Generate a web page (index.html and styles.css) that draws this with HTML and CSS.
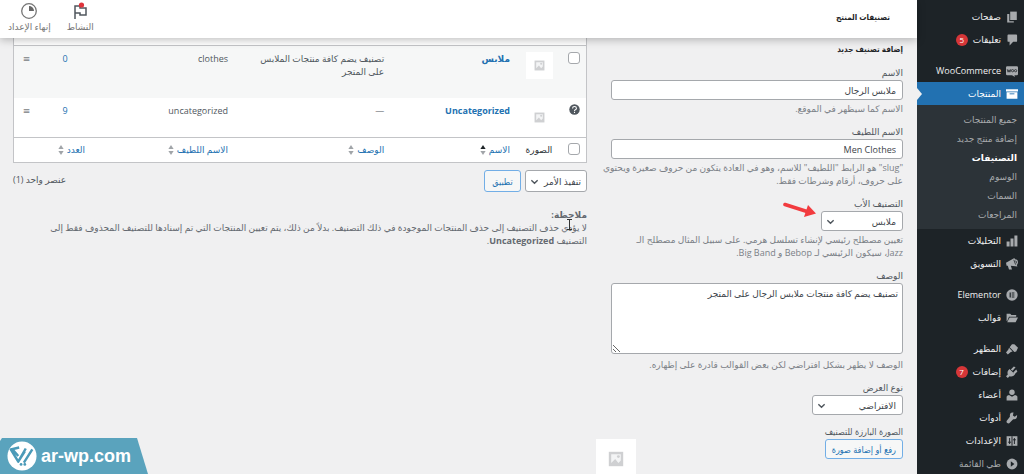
FILE: index.html
```html
<!DOCTYPE html>
<html lang="ar" dir="rtl">
<head>
<meta charset="utf-8">
<title>تصنيفات المنتج</title>
<link rel="stylesheet" href="styles.css">
</head>
<body>
<svg class="defs" aria-hidden="true">
  <symbol id="placeholder" viewBox="0 0 20 20">
    <path d="M1 1h18v18H1z" fill="#cfd0d2"/>
    <path d="M4 4h12v8l-3 3-4-5-5 5z" fill="#f3f4f5"/>
    <circle cx="13" cy="7" r="1.800" fill="#cfd0d2"/>
  </symbol>
  <symbol id="sort" viewBox="0 0 6 12"><path class="up" d="M3 1l2.600 4H.4z"/><path class="down" d="M3 11L.4 7h5.200z"/></symbol>
</svg>
<div class="shell">
  <nav class="menu" aria-label="القائمة الرئيسية">
    <ul class="menu-list">
      <li><a class="item" href="#"><svg class="icon" viewBox="0 0 20 20"><path d="M7 1h11v14H7z"/><path d="M2 5h3.500v12H13v2H2z"/></svg>صفحات</a></li>
      <li><a class="item" href="#"><svg class="icon" viewBox="0 0 20 20"><path d="M4 1h13q1.500 0 1.500 1.500v9q0 1.500-1.500 1.500h-5l-6 6v-6H4q-1.500 0-1.500-1.500v-9Q2.500 1 4 1z"/></svg>تعليقات<span class="badge">5</span></a></li>
      <li class="group"><a class="item" href="#"><svg class="icon" viewBox="0 0 20 20"><path d="M2 2h16q2 0 2 2v11q0 2-2 2h-4l1 3-5-3H2q-2 0-2-2V4q0-2 2-2z"/><path d="M2 7l1.500 5L5 8l1.500 4L8 7" fill="none" stroke="#1d2327" stroke-width="1.300"/><circle cx="11" cy="9.500" r="1.900" fill="none" stroke="#1d2327" stroke-width="1.300"/><circle cx="16" cy="9.500" r="1.900" fill="none" stroke="#1d2327" stroke-width="1.300"/></svg>WooCommerce</a></li>
      <li><a class="item current" href="#"><svg class="icon" viewBox="0 0 20 20"><path d="M0 2h20v4H0zM1 7h18v11H1z"/><path d="M6 9h8v1.500H6z" fill="#2271b1"/></svg>المنتجات</a>
        <ul class="submenu">
          <li><a href="#">جميع المنتجات</a></li>
          <li><a href="#">إضافة منتج جديد</a></li>
          <li><a class="active" href="#">التصنيفات</a></li>
          <li><a href="#">الوسوم</a></li>
          <li><a href="#">السمات</a></li>
          <li><a href="#">المراجعات</a></li>
        </ul>
      </li>
      <li><a class="item" href="#"><svg class="icon" viewBox="0 0 20 20"><path d="M14 1h5v18h-5zM7.500 6h5v13h-5zM1 11h5v8H1z"/></svg>التحليلات</a></li>
      <li><a class="item" href="#"><svg class="icon" viewBox="0 0 20 20"><path d="M0 8L14 0l5 14-11-1 2 6H5l-2-6H1z"/><circle cx="15" cy="7" r="4" fill="none" stroke="#a7aaad" stroke-width="2"/><path d="M13 3l3 8" stroke="#1d2327" stroke-width="1.300"/></svg>التسويق</a></li>
      <li class="group"><a class="item" href="#"><svg class="icon" viewBox="0 0 20 20"><circle cx="10" cy="10" r="9.500"/><path d="M6 6h2v8H6zM9.500 6H14v1.600H9.500zM9.500 9.200H14v1.600H9.500zM9.500 12.400H14V14H9.500z" fill="#1d2327"/></svg>Elementor</a></li>
      <li><a class="item" href="#"><svg class="icon" viewBox="0 0 20 20"><path d="M1 3h6l2 2h8v3H5l-3 7H1z"/><path d="M6 9h14l-4 8H2z"/></svg>قوالب</a></li>
      <li class="group"><a class="item" href="#"><svg class="icon" viewBox="0 0 20 20"><path d="M10 2l4 0 6 6-3 6-3 1-8-8z"/><path d="M5 8l6 6-3 1-5 4-3-3 4-5z"/></svg>المظهر</a></li>
      <li><a class="item" href="#"><svg class="icon" viewBox="0 0 20 20"><path d="M6 5l9 9q-4 5-9 3l-3 3-3-3 3-3q-2-5 3-9z"/><path d="M8 6l5-5 3 1-5 6zM12 11l5-5 2 3-5 5z"/></svg>إضافات<span class="badge">7</span></a></li>
      <li><a class="item" href="#"><svg class="icon" viewBox="0 0 20 20"><circle cx="10" cy="5.500" r="4.500"/><path d="M1 19v-6q0-2 4-3l5 3 5-3q4 1 4 3v6z"/></svg>أعضاء</a></li>
      <li><a class="item" href="#"><svg class="icon" viewBox="0 0 20 20"><path d="M18.500 5l-4 3-3-2 1-5q-7-1-6 7L1 15q-1 4 4 4l7-7q7 1 6.500-7z"/></svg>أدوات</a></li>
      <li><a class="item" href="#"><svg class="icon" viewBox="0 0 20 20"><path d="M1 2h18v16H1z"/><path d="M6 5v10M14 5v10M3.500 12h5M11.500 8h5M10 2v16" stroke="#1d2327" stroke-width="1.600"/></svg>الإعدادات</a></li>
      <li><a class="item collapse" href="#"><svg class="icon" viewBox="0 0 20 20"><circle cx="10" cy="10" r="9"/><path d="M8 5.500v9l6-4.500z" fill="#1d2327"/></svg>طي القائمة</a></li>
    </ul>
  </nav>

  <div class="page">
    <header class="topbar">
      <h1 class="topbar-title">تصنيفات المنتج</h1>
      <div class="topbar-actions">
        <button class="tab" type="button"><svg class="tab-icon" viewBox="0 0 18 18"><path d="M4 17V4h5v2h6v7H9v-2H4" fill="none" stroke="#50575e" stroke-width="1.500"/><circle cx="10.500" cy="3" r="2.600" fill="#e0343c"/></svg>النشاط</button>
        <button class="tab" type="button"><svg class="tab-icon" viewBox="0 0 18 18"><circle cx="9" cy="9" r="7.300" fill="none" stroke="#757575" stroke-width="1.300"/><path d="M9 4a5 5 0 0 1 5 5H9z" fill="#666"/></svg>إنهاء الإعداد</button>
      </div>
    </header>

    <main class="columns">
      <form class="form">
        <h2 class="form-title">إضافة تصنيف جديد</h2>
        <div class="field">
          <label for="name">الاسم</label>
          <input class="control" id="name" type="text" value="ملابس الرجال">
          <p class="help">الاسم كما سيظهر في الموقع.</p>
        </div>
        <div class="field">
          <label for="slug">الاسم اللطيف</label>
          <input class="control" id="slug" type="text" value="Men Clothes">
          <p class="help">"slug" هو الرابط "اللطيف" للاسم، وهو في العادة يتكون من حروف صغيرة ويحتوي<br>على حروف، أرقام وشرطات فقط.</p>
        </div>
        <div class="field">
          <label for="parent">التصنيف الأب</label>
          <div class="pointed">
            <select class="control select parent" id="parent"><option>ملابس</option></select>
            <svg class="arrow" viewBox="0 0 34 16" aria-hidden="true"><path d="M2 2.500L24 9.500" stroke="#f23b3f" stroke-width="3.600" stroke-linecap="round"/><path d="M25 3l8 8.500-12 3.500z" fill="#f23b3f"/></svg>
          </div>
          <p class="help">تعيين مصطلح رئيسي لإنشاء تسلسل هرمي. على سبيل المثال مصطلح الـ<br>Jazz، سيكون الرئيسي لـ Bebop و Big Band.</p>
        </div>
        <div class="field">
          <label for="description">الوصف</label>
          <textarea class="control area" id="description">تصنيف يضم كافة منتجات ملابس الرجال على المتجر</textarea>
          <p class="help">الوصف لا يظهر بشكل افتراضي لكن بعض القوالب قادرة على إظهاره.</p>
        </div>
        <div class="field">
          <label for="display">نوع العرض</label>
          <select class="control select display" id="display"><option>الافتراضي</option></select>
        </div>
        <div class="field upload">
          <div class="upload-main">
            <label for="upload">الصورة البارزة للتصنيف</label>
            <button class="button" id="upload" type="button">رفع أو إضافة صورة</button>
          </div>
          <div class="preview"><svg viewBox="0 0 20 20"><use href="#placeholder"/></svg></div>
        </div>
      </form>

      <section class="listing">
        <table class="terms">
          <colgroup><col class="c-check"><col class="c-thumb"><col class="c-name"><col class="c-desc"><col class="c-slug"><col class="c-count"><col class="c-handle"></colgroup>
          <thead><tr><th colspan="7"></th></tr></thead>
          <tbody>
            <tr class="alt">
              <td class="mid"><input class="check" type="checkbox" aria-label="تحديد ملابس"></td>
              <td class="mid"><span class="thumb"><svg viewBox="0 0 20 20"><use href="#placeholder"/></svg></span></td>
              <td><a class="name" href="#">ملابس</a></td>
              <td>تصنيف يضم كافة منتجات الملابس<br>على المتجر</td>
              <td>clothes</td>
              <td class="mid"><a href="#">0</a></td>
              <td class="mid handle">≡</td>
            </tr>
            <tr>
              <td class="mid"><svg class="tip" viewBox="0 0 20 20"><circle cx="10" cy="10" r="9.500" fill="#50575e"/><path d="M6.500 8q0-3.500 3.500-3.500T13.500 8q0 1.500-2 2.500-1.500.8-1.500 2M10 14v2.200" fill="none" stroke="#fff" stroke-width="2"/></svg></td>
              <td class="mid"><span class="thumb"><svg viewBox="0 0 20 20"><use href="#placeholder"/></svg></span></td>
              <td><a class="name" href="#">Uncategorized</a></td>
              <td>—</td>
              <td>uncategorized</td>
              <td class="mid"><a href="#">9</a></td>
              <td class="mid handle">≡</td>
            </tr>
          </tbody>
          <tfoot>
            <tr>
              <td class="mid"><input class="check" type="checkbox" aria-label="تحديد الكل"></td>
              <th class="mid">الصورة</th>
              <th><a class="sort sorted" href="#">الاسم<svg viewBox="0 0 6 12"><use href="#sort"/></svg></a></th>
              <th><a class="sort" href="#">الوصف<svg viewBox="0 0 6 12"><use href="#sort"/></svg></a></th>
              <th><a class="sort" href="#">الاسم اللطيف<svg viewBox="0 0 6 12"><use href="#sort"/></svg></a></th>
              <th><a class="sort" href="#">العدد<svg viewBox="0 0 6 12"><use href="#sort"/></svg></a></th>
              <th></th>
            </tr>
          </tfoot>
        </table>
        <div class="bulk">
          <select class="control select action" aria-label="تنفيذ الأمر"><option>تنفيذ الأمر</option></select>
          <button class="button apply" type="button">تطبيق</button>
          <span class="total">عنصر واحد (1)</span>
        </div>
        <div class="note">
          <strong>ملاحظة:</strong>
          <p>لا يؤدي حذف التصنيف إلى حذف المنتجات الموجودة في ذلك التصنيف. بدلاً من ذلك، يتم تعيين المنتجات التي تم إسنادها للتصنيف المحذوف فقط إلى<br>التصنيف <b>Uncategorized</b>.</p>
          <svg class="caret" viewBox="0 0 5 11" aria-hidden="true"><path d="M0 .5h5M0 10.500h5M2.500 1v9" stroke="#333" stroke-width="1"/></svg>
        </div>
      </section>
    </main>
  </div>

  <div class="watermark">
    <svg viewBox="0 0 32 32" aria-hidden="true"><circle cx="16" cy="16" r="15.500" fill="#fff"/><path d="M13 7L4 9l8 13 7-11M12 22l8-14M18 23l9-14M6 9l6 7" fill="none" stroke="#4a9ab8" stroke-width="2.600" stroke-linejoin="round"/><circle cx="15" cy="25" r="1.500" fill="#4a9ab8"/><circle cx="19" cy="25" r="1.500" fill="#4a9ab8"/></svg>
    <span>ar-wp.com</span>
  </div>
</div>
</body>
</html>
```
FILE: styles.css
```css
* { box-sizing: border-box; }
body {
  margin: 0;
  background: #f0f0f1;
  color: #50575e;
  font: 9px/13px "Open Sans", "DejaVu Sans", sans-serif;
}
h1, h2, p, ul { margin: 0; padding: 0; }
ul { list-style: none; }
a { color: #2271b1; text-decoration: none; }
input, select, textarea, button { font: inherit; margin: 0; }
.defs { position: absolute; width: 0; height: 0; }
.shell { position: relative; display: flex; height: 100vh; overflow: hidden; }

.menu { flex: 0 0 107px; background: #1d2327; padding-top: 5px; }
.item {
  position: relative;
  display: flex;
  align-items: center;
  gap: 5px;
  height: 23px;
  padding-inline: 6px;
  color: #f0f0f1;
  white-space: nowrap;
}
.icon { width: 12px; height: 12px; fill: #a7aaad; flex: none; }
.group { margin-top: 8px; }
.current { background: #2271b1; color: #fff; }
.current .icon { fill: #fff; }
.current::after {
  content: "";
  position: absolute;
  left: 0;
  top: 6px;
  border: 6px solid transparent;
  border-width: 6px 0 6px 5px;
  border-left-color: #f0f0f1;
}
.collapse { color: #a7aaad; }
.badge {
  width: 12px;
  height: 12px;
  border-radius: 50%;
  background: #d63638;
  color: #fff;
  font-size: 8px;
  line-height: 12px;
  text-align: center;
}
.submenu { background: #2c3338; padding: 5px 7px; }
.submenu a { display: block; line-height: 19px; color: #a7aaad; white-space: nowrap; }
.submenu .active { color: #fff; font-weight: 700; }

.page { flex: 1; min-width: 0; }
.topbar {
  position: relative;
  display: flex;
  align-items: center;
  justify-content: space-between;
  height: 38px;
  padding: 0 27px 4px 8px;
  background: #fff;
  box-shadow: 0 2px 8px rgba(0, 0, 0, .25);
}
.topbar-title,
.form-title {
  color: #1d2327;
  font: 700 8px/14px "Open Sans", "DejaVu Sans Condensed", sans-serif;
}
.topbar-actions { display: flex; gap: 16px; }
.tab {
  display: flex;
  flex-direction: column;
  align-items: center;
  padding: 0;
  border: 0;
  background: none;
  color: #757575;
}
.tab-icon { width: 18px; height: 18px; }

.columns {
  display: grid;
  grid-template-columns: minmax(0, 292fr) minmax(0, 574fr);
  gap: 24px;
  padding-inline: 14px 13px;
}
.form { display: flex; flex-direction: column; gap: 10px; padding-top: 4px; }
.field label { display: block; line-height: 14px; }
.control {
  display: block;
  width: 100%;
  height: 20px;
  padding: 0 6px;
  border: 1px solid #a5a8ac;
  border-radius: 3px;
  background-color: #fff;
  color: #3c434a;
}
.help { margin-top: 2px; color: #7b8087; white-space: nowrap; }
.select {
  appearance: none;
  background-image: url("data:image/svg+xml,%3Csvg xmlns='http://www.w3.org/2000/svg' viewBox='0 0 10 10'%3E%3Cpath d='M1.500 3.500L5 7l3.500-3.500' fill='none' stroke='%2350575e' stroke-width='1.600'/%3E%3C/svg%3E");
  background-repeat: no-repeat;
  background-position: 4px center;
  background-size: 9px 9px;
}
.pointed { position: relative; }
.parent { width: 82px; }
.display { width: 91px; }
.arrow { position: absolute; right: 86px; top: -9px; width: 34px; height: 16px; }
.area { height: 71px; padding: 3px 4px; resize: vertical; }
.area + .help { margin-top: 4px; }
.button {
  height: 20px;
  padding: 0 6px;
  border: 1px solid #72aee6;
  border-radius: 3px;
  background: #f6f7f7;
  color: #2271b1;
  white-space: nowrap;
}
.upload { display: flex; justify-content: space-between; }
.upload-main,
.button { font-family: "Open Sans", "DejaVu Sans Condensed", sans-serif; }
.preview {
  display: grid;
  place-items: center;
  width: 40px;
  height: 40px;
  margin: 14px 0 0 -15px;
  background: #fff;
}
.preview svg { width: 16px; height: 16px; }

.terms {
  width: 100%;
  table-layout: fixed;
  border-collapse: separate;
  border-spacing: 0;
  border: 1px solid #c3c4c7;
  border-top: 0;
  background: #fff;
}
.c-check { width: 24px; }
.c-thumb { width: 46px; }
.c-name { width: 22%; }
.c-slug { width: 25%; }
.c-count { width: 52px; }
.c-handle { width: 25px; }
.terms th, .terms td { padding: 6px; text-align: start; vertical-align: top; font-weight: 400; }
.terms thead th { height: 8px; padding: 0; border-bottom: 1px solid #c3c4c7; }
.terms .alt td { height: 52px; background: #f6f7f7; }
.terms tbody td { height: 39px; }
.terms tfoot th, .terms tfoot td { height: 25px; padding-block: 5px; border-top: 1px solid #c3c4c7; color: #2c3338; }
.terms .mid { padding-inline: 0; text-align: center; }
.terms .handle { color: #787c82; }
.check {
  appearance: none;
  width: 12px;
  height: 12px;
  border: 1px solid #a5a8ac;
  border-radius: 3px;
  background: #fff;
  vertical-align: top;
}
.tip { width: 11px; height: 11px; vertical-align: top; }
.thumb { display: inline-grid; place-items: center; width: 27px; height: 27px; background: #fff; vertical-align: top; }
.thumb svg { width: 11px; height: 11px; }
.name { font-weight: 700; }
.sort { --up: #a0a4a8; display: flex; align-items: center; gap: 3px; white-space: nowrap; }
.sort svg { width: 6px; height: 12px; }
.sorted { --up: #1d2327; }
.up { fill: var(--up); }
.down { fill: #a0a4a8; }

.bulk { display: flex; gap: 4px; margin-top: 7px; }
.bulk .control, .bulk .button { height: 22px; }
.action { width: 62px; padding-inline: 5px 0; }
.apply { width: 37px; }
.total { margin-inline-start: auto; line-height: 20px; }
.note { position: relative; margin-top: 16px; color: #646970; }
.caret { position: absolute; right: 15px; top: 11px; width: 5px; height: 11px; }

.watermark {
  position: absolute;
  left: 0;
  bottom: 0;
  display: flex;
  direction: ltr;
  align-items: center;
  gap: 4px;
  width: 148px;
  height: 36px;
  padding-left: 7px;
  background: #5aa3bd;
  clip-path: polygon(2px 0, 137px 0, 100% 100%, 0 100%, 0 3px);
  color: #fff;
  font: 700 18px/20px "Liberation Sans", Arial, sans-serif;
}
.watermark svg { width: 30px; height: 30px; }
```
